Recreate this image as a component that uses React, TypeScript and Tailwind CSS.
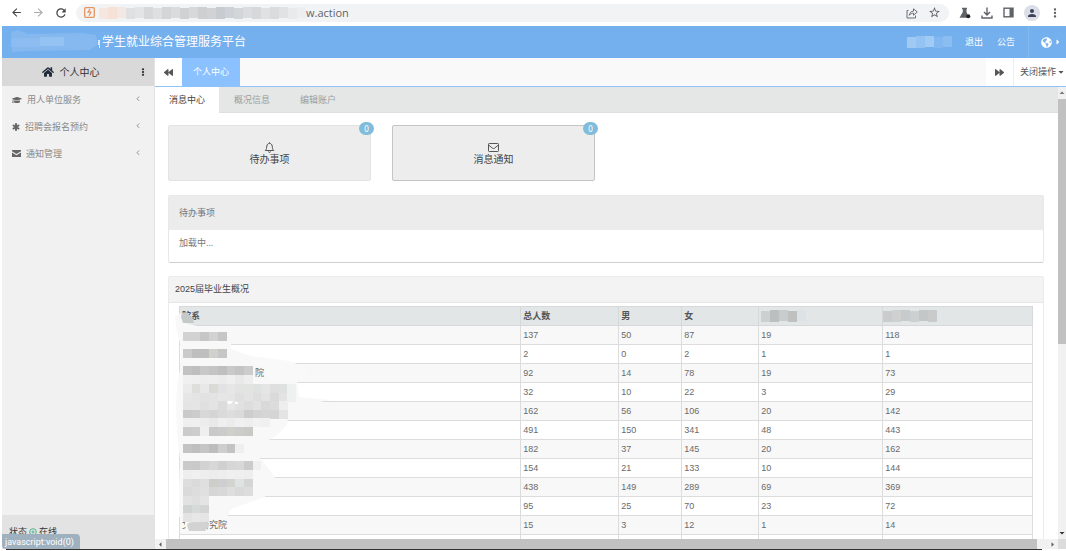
import type { ReactNode } from "react";
import {
  FaBackward,
  FaCaretDown,
  FaCaretRight,
  FaEllipsisV,
  FaForward,
  FaGlobeAmericas,
  FaGraduationCap,
  FaHome,
} from "react-icons/fa";
import {
  MdArrowBack,
  MdArrowDropDown,
  MdArrowDropUp,
  MdArrowForward,
  MdArrowLeft,
  MdArrowRight,
  MdMoreVert,
  MdPerson,
  MdRefresh,
  MdStarBorder,
} from "react-icons/md";

type Row = { dept: string; pad?: boolean; values: number[] };

const rows: Row[] = [
  { dept: "", values: [137, 50, 87, 19, 118] },
  { dept: "", values: [2, 0, 2, 1, 1] },
  { dept: "院", pad: true, values: [92, 14, 78, 19, 73] },
  { dept: "", values: [32, 10, 22, 3, 29] },
  { dept: "", values: [162, 56, 106, 20, 142] },
  { dept: "", values: [491, 150, 341, 48, 443] },
  { dept: "", values: [182, 37, 145, 20, 162] },
  { dept: "", values: [154, 21, 133, 10, 144] },
  { dept: "", values: [438, 149, 289, 69, 369] },
  { dept: "", values: [95, 25, 70, 23, 72] },
  { dept: "文　研究院", values: [15, 3, 12, 1, 14] },
];

// [y, cell colours]
const maskRows: Array<[number, string[]]> = [
  [29, ["#d2d2d2", "#d2d2d2", "#c6c6c6", "#d2d2d2", "#c6c6c6"]],
  [46, ["#cacaca", "#bfbfbf", "#bfbfbf", "#d0d0cc", "#c6c6c6"]],
  [63, ["#c2c2c2", "#bebebe", "#c8c8c8", "#c4c4c4", "#bfbfbf", "#c9c9c9", "#c4c4c4", "#cccccc"]],
  [72, ["#f0f0f0", "#efefef", "#ededed", "#eeeeee", "#ebebeb", "#efefef", "#e9e9e9", "#eeeeee"]],
  [81, ["#ebebeb", "#dedfdc", "#e8e8e8", "#dadad6", "#e2e2e2", "#e6e6e6", "#e3e3e3", "#e2e4e2", "#e0e2e1", "#e4e5e4", "#dedfde", "#dfe1e0", "#eff1f0"]],
  [90, ["#e6e6e6", "#e4e4e4", "#e2e2e2", "#e3e3e3", "#e6e6e6", "#e5e5e5", "#dfdfdf", "#e3e3e3", "#dedede", "#e3e3e3", "#dadada", "#e3e3e3", "#eff1f0"]],
  [98, ["#e4e4e4", "#e5e5e5", "#e0e0e0", "#e3e3e3", "#dcdcdc", "#e6e6e6", "#e1e1e1", "#dddddd", "#e2e2e2", "#d9d9d9", "#dcdcdc", "#eeeeee"]],
  [107, ["#cacaca", "#cccccc", "#d8d8d8", "#d5d5d5", "#dadada", "#dddddd", "#dadada", "#cdcdcd", "#d3d3d3", "#d5d5d5", "#d5d5d5", "#e4e4e4"]],
  [115, ["#efefef", "#f0f0f0", "#ededed", "#e9e9e9", "#efefef", "#ececec", "#f0f0f0", "#eeeeee", "#f2f2f2", "#f0f0f0"]],
  [124, ["#cbcbcb", "#cdcdcd", "#efefef", "#c9c9c9", "#cbcbcb", "#cfcfcb", "#cccccc", "#c9c9c5"]],
  [141, ["#c3c3c3", "#bfbfbf", "#c5c5c5", "#bdbdbd", "#cecece", "#c3c3c3", "#eef0ef"]],
  [158, ["#cacaca", "#c9c9c9", "#d2d2d2", "#d7d7d7", "#d0d0d0", "#d6d6d6", "#d8d8d8", "#cbcbcb", "#f0f0f0"]],
  [167, ["#eeeeee", "#f0f0f0", "#eeeeee", "#ececec", "#eeeeee", "#f0f0f0", "#efefef", "#eeeeee"]],
  [176, ["#dddddd", "#dadada", "#dfdfdf", "#cdcdc9", "#cfcfcf", "#d3d3cf", "#dfe3e1", "#d5d5d5"]],
  [184, ["#dadada", "#dddddd", "#e0e0e0", "#d6d6d6", "#d8d8d8", "#dedede", "#d9d9d9", "#dcdcdc"]],
  [193, ["#e2e2e2", "#dfdfdf", "#e4e4e4"]],
  [202, ["#cfd3d1", "#d6dad8", "#d3d5d4"]],
  [210, ["#e3e3e3", "#e7e7e7", "#e5e5e5"]],
];

function DeptMask() {
  return (
    <svg className="pointer-events-none absolute left-0 top-0" width="170" height="236" viewBox="0 0 170 236" aria-hidden="true">
      <path d="M6 14 12 10 16 20 28 23 62 25 62 46 84 54 84 76 96 78 128 78 130 94 162 97 120 104 118 122 108 132 92 142 84 150 94 158 106 174 98 184 96 194 62 206 58 214 38 216 38 226 30 228 22 230 16 224 16 216 10 214 10 182 11 156 8 130 7 106 8 82 11 66 12 44 7 24Z" fill="#f8f8f8" />
      <path d="M84 53 120 58 136 64 140 76 118 80 98 77 98 64 84 62Z" fill="#f9f9f9" />
      <path d="M12 14 13 10 18 9 24 16 25 20 14 20Z" fill="#c6c9ca" />
      <path d="M18 222q0-3 8-3h11q4 0 3 4l-4 5H20Z" fill="#d2d2d2" />
      <g shapeRendering="crispEdges">
        {maskRows.map(([y, cells]) =>
          cells.map((fill, i) => (
            <rect key={`${y}-${i}`} x={14 + i * 8.7} y={y} width="8.8" height="9" fill={fill} />
          )),
        )}
      </g>
      <path d="M58 98h6l-2 3h-3zM66 99h3v2h-3z" fill="#fff" />
    </svg>
  );
}

function Mosaic({ cells, size, className }: { cells: string[]; size: number; className?: string }) {
  return (
    <svg className={className} width={cells.length * size} height="12" shapeRendering="crispEdges" aria-hidden="true">
      {cells.map((fill, i) => (
        <rect key={i} x={i * size} y={i % 3 === 0 ? 1 : 0} width={size} height={i % 2 ? 12 : 11} fill={fill} />
      ))}
    </svg>
  );
}

function BrowserBar() {
  return (
    <div className="flex h-[26px] shrink-0 items-center pb-px text-[#5f6368]">
      <div className="ml-2 flex gap-[9px] text-[#444]">
        <button type="button" aria-label="后退"><MdArrowBack size={13} /></button>
        <button type="button" aria-label="前进" className="text-[#aaa]"><MdArrowForward size={13} /></button>
        <button type="button" aria-label="刷新"><MdRefresh size={14} /></button>
      </div>
      <div className="ml-2 flex h-[18px] min-w-0 flex-1 items-center rounded-full bg-[#f1f3f4] px-2">
        <svg width="11" height="11" viewBox="0 0 11 11" fill="none" stroke="#e9935f" className="shrink-0" aria-hidden="true">
          <rect x="0.7" y="0.7" width="9.6" height="9.6" rx="1" strokeWidth="1.3" />
          <path d="M6 2.2 4 5.2h3L5 8.8" strokeWidth="1.2" />
        </svg>
        <Mosaic
          className="ml-1 shrink-0"
          size={9}
          cells={["#f5e6df", "#f6e1d7", "#f3e8e3", "#dfe0e1", "#e3e4e5", "#d6d8da", "#dddfe0", "#d4d5d7", "#d9dbdc", "#cfd1d3", "#d6d8d9", "#cdcfd1", "#d0d2d4", "#c8ccd0", "#cdd2d7", "#d3d6d9", "#dadcde", "#d6d8da", "#dfe1e2", "#d9dbdc", "#e0e2e3", "#e8eaeb", "#eceeef"]}
        />
        <span className="font-['Open_Sans',sans-serif] text-[11px] leading-4">w.action</span>
        <button type="button" aria-label="分享" className="ml-auto">
          <svg width="12" height="12" viewBox="0 0 12 12" fill="none" stroke="currentColor" strokeWidth="0.9" aria-hidden="true">
            <path d="M2.500 3.500H1v7.500h8.500V8.500M3.300 8.300C3.800 5.400 5.300 4.200 7.500 4.200V1.800L11.300 5 7.500 8.200V6.200C5.800 6.200 4.500 6.800 3.300 8.300Z" />
          </svg>
        </button>
        <button type="button" aria-label="收藏" className="ml-2.5"><MdStarBorder size={13} /></button>
      </div>
      <button type="button" aria-label="实验" className="ml-2.5">
        <svg width="12" height="12" viewBox="0 0 12 12" aria-hidden="true">
          <path d="M3 0.800h5v1.400H7.500V5l2.500 5.700H0.500L3.800 5V2.200H3Z" fill="currentColor" />
          <circle cx="9.300" cy="9.300" r="2" fill="#222" />
        </svg>
      </button>
      <button type="button" aria-label="下载" className="ml-2.5">
        <svg width="12" height="12" viewBox="0 0 12 12" fill="none" stroke="currentColor" strokeWidth="1.400" aria-hidden="true">
          <path d="M6 0.500v7M3 5l3 3 3-3M1 8.500V11h10V8.500" />
        </svg>
      </button>
      <button type="button" aria-label="侧边栏" className="ml-2.5">
        <svg width="11" height="11" viewBox="0 0 11 11" aria-hidden="true">
          <rect x="1" y="1.200" width="9" height="8.600" fill="none" stroke="currentColor" strokeWidth="1.400" />
          <path d="M6.500 1H10v9H6.500Z" fill="currentColor" />
        </svg>
      </button>
      <button type="button" aria-label="用户" className="ml-2.5 flex size-4 items-center justify-center rounded-full bg-[#dcdfe8] text-[#3c4257]"><MdPerson size={12} /></button>
      <button type="button" aria-label="更多" className="ml-2 mr-1"><MdMoreVert size={14} /></button>
    </div>
  );
}

function Header() {
  return (
    <header className="flex h-8 shrink-0 items-center bg-[#74afee] text-white">
      <div className="flex min-w-0 flex-1 items-center pl-2">
        <svg width="92" height="24" viewBox="0 0 92 24" className="shrink-0" aria-hidden="true">
          <path d="M1 2 8 0 18 4 72 3 86 5 88 14 80 20 20 21 2 22Z" fill="#84b8ef" />
          <path d="M1 8H30V17H1Z" fill="#8dbdf0" />
          <path d="M30 7H54V16H30Z" fill="#94c2f2" />
          <path d="M54 8H84V17H54Z" fill="#86b9ef" />
          <path d="M88 10h2v8h-1v-3h-1z" fill="#d6e8fb" />
        </svg>
        <h1 className="truncate text-[12px] leading-4">学生就业综合管理服务平台</h1>
      </div>
      <Mosaic size={9} className="mr-3" cells={["#a0c9f4", "#94c2f2", "#a1caf4", "#82b7ef", "#8abdf0"]} />
      <nav className="flex h-full items-center text-[9px]">
        <a href="#logout" className="px-px">退出</a>
        <a href="#notice" className="ml-3 px-px">公告</a>
        <button type="button" aria-label="语言" className="ml-3 flex h-full items-center gap-0.5 border-l border-[#84b9f0] pl-3 pr-1">
          <FaGlobeAmericas size={11} />
          <FaCaretRight size={8} />
        </button>
      </nav>
    </header>
  );
}

function SideItem({ icon, label }: { icon: ReactNode; label: string }) {
  return (
    <li>
      <a href="#menu" className="flex h-[27px] items-center pl-2.5 pr-3.5 text-[9px] text-[#8a8a8a]">
        <span className="text-[#666]">{icon}</span>
        <span className="ml-[5px] flex-1">{label}</span>
        <svg width="4" height="8" viewBox="0 0 4 8" fill="none" stroke="#888" strokeWidth="0.9" aria-hidden="true">
          <path d="M3.200 0.500 1 2.700l2.200 2.200" />
        </svg>
      </a>
    </li>
  );
}

function Sidebar() {
  return (
    <aside className="flex w-[153px] shrink-0 flex-col border-r border-[#e2e2e2] bg-[#f1f1f1]">
      <div className="flex h-7 shrink-0 items-center bg-[#d9d9d9] pr-[7px] text-[#333]">
        <div className="flex flex-1 items-center justify-center gap-1.5 text-[10px]">
          <FaHome size={12} className="text-[#222c3c]" />
          个人中心
        </div>
        <FaEllipsisV size={8} />
      </div>
      <ul className="flex-1">
        <SideItem icon={<FaGraduationCap size={10} />} label="用人单位服务" />
        <SideItem
          icon={
            <svg width="8" height="8" viewBox="0 0 8 8" stroke="currentColor" strokeWidth="2" strokeLinecap="round" aria-hidden="true">
              <path d="M4 1v6M1.500 2.500l5 3M6.500 2.500l-5 3" />
            </svg>
          }
          label="招聘会报名预约"
        />
        <SideItem
          icon={
            <svg width="9" height="7" viewBox="0 0 9 7" fill="currentColor" aria-hidden="true">
              <path d="M0 0h9v1.200L4.500 4 0 1.200ZM0 2.400l4.500 2.800L9 2.400V7H0Z" />
            </svg>
          }
          label="通知管理"
        />
      </ul>
      <div className="relative h-[34px] shrink-0 bg-[#e3e3e3] pl-[7px] pt-3 text-[9px] leading-none text-[#333]">
        <div className="flex h-[9px] items-center gap-0.5">
          状态
          <svg width="8" height="8" viewBox="0 0 8 8" fill="none" stroke="#4db592" aria-hidden="true">
            <circle cx="4" cy="4" r="3.300" />
            <circle cx="4" cy="4" r="1" />
          </svg>
          在线
        </div>
        <div className="absolute bottom-0 left-0 rounded-tr-sm rounded-bl bg-[#9fb0be] px-[3px] pb-px pt-[3px] pr-1.5 font-['Roboto',sans-serif] text-[9px] leading-[11px] text-white">javascript:void(0)</div>
      </div>
    </aside>
  );
}

function Counter({ icon, label, count, active }: { icon: ReactNode; label: string; count: number; active?: boolean }) {
  return (
    <button
      type="button"
      className={`relative flex h-14 w-[203px] flex-col items-center justify-center rounded-xs border bg-[#ededed] pt-px text-[10px] leading-[13px] text-[#444] ${active ? "border-[#c4c4c4]" : "border-[#e3e3e3]"}`}
    >
      {icon}
      {label}
      <span className="absolute -right-1 -top-1 flex h-[13px] w-[15px] items-center justify-center rounded-full bg-[#82bcdb] text-[8px] text-white">{count}</span>
    </button>
  );
}

function SummaryTable() {
  return (
    <table className="w-full table-fixed border-collapse font-['Liberation_Sans','Noto_Sans_CJK_SC',sans-serif] text-[9px] leading-[18px] text-[#6a6a6a]">
      <colgroup>
        <col className="w-[40%]" />
        <col className="w-[98px]" />
        <col className="w-[63px]" />
        <col className="w-[77px]" />
        <col className="w-[124px]" />
        <col />
      </colgroup>
      <thead>
        <tr className="bg-[#e2e6e7] text-left text-[#555]">
          <th className="border border-[#d6d9da] px-0.5 py-0">院系</th>
          <th className="border border-[#d6d9da] px-0.5 py-0">总人数</th>
          <th className="border border-[#d6d9da] px-0.5 py-0">男</th>
          <th className="border border-[#d6d9da] px-0.5 py-0">女</th>
          <th className="border border-[#d6d9da] px-0.5 py-0">
            <Mosaic size={9} cells={["#cdd0d0", "#bcbfbf", "#c9cccc", "#bfc1c1", "#dde2e4"]} />
          </th>
          <th className="border border-[#d6d9da] p-0">
            <Mosaic size={9} cells={["#c9cccc", "#cfd1d1", "#c8cbcb", "#cdd0d0", "#c4c7c7", "#c9cbcb"]} />
          </th>
        </tr>
      </thead>
      <tbody>
        {rows.map((row, i) => (
          <tr key={i} className="h-[19px] odd:bg-[#f8f8f8]">
            <td className={`border border-[#dcdcdc] py-0 pr-0.5 ${row.pad ? "pl-[75px]" : "pl-0.5"}`}>{row.dept}</td>
            {row.values.map((value, j) => (
              <td key={j} className="border border-[#dcdcdc] px-0.5 py-0">{value}</td>
            ))}
          </tr>
        ))}
        <tr className="h-[19px]">
          {[0, 1, 2, 3, 4, 5].map((n) => (
            <td key={n} className="border border-[#dcdcdc] p-0" />
          ))}
        </tr>
      </tbody>
    </table>
  );
}

function Workspace() {
  return (
    <div className="flex min-h-0 flex-1">
      <div className="flex min-w-0 flex-1 flex-col">
        <div className="min-h-0 flex-1 overflow-hidden">
          <div className="flex h-[26px] border-b border-[#dfe1e0] bg-[#e5e7e6] text-[9px] text-[#9a9e9e]">
            <button type="button" className="-mb-px bg-white px-3.5 text-[#444]">消息中心</button>
            <button type="button" className="px-[15px]">概况信息</button>
            <button type="button" className="px-[15px]">编辑账户</button>
          </div>
          <div className="py-3 pl-[13px] pr-3.5">
            <div className="flex gap-[21px]">
              <Counter
                label="待办事项"
                count={0}
                icon={
                  <svg width="11" height="11" viewBox="0 0 11 11" fill="none" stroke="currentColor" strokeWidth="0.9" aria-hidden="true">
                    <path d="M5.500 0.300v1M1.300 8.500C2.800 7.200 2.500 5.500 2.800 4 3.100 2.200 4.200 1.400 5.500 1.400S7.900 2.200 8.200 4c0.300 1.500 0 3.200 1.500 4.500ZM4.500 9.500a1 0.900 0 0 0 2 0" />
                  </svg>
                }
              />
              <Counter
                active
                label="消息通知"
                count={0}
                icon={
                  <svg width="11" height="11" viewBox="0 0 11 11" fill="none" stroke="currentColor" strokeWidth="0.9" aria-hidden="true">
                    <rect x="0.500" y="1.500" width="10" height="8" rx="0.800" />
                    <path d="M0.800 3.200 4.500 6.200q1 0.700 2 0L10.200 3.200" />
                  </svg>
                }
              />
            </div>
            <section className="mt-3.5 rounded-xs border border-[#e8e8e8] border-b-[#cfcfcf] text-[9px] text-[#777]">
              <h2 className="bg-[#ececec] px-2.5 leading-[34px]">待办事项</h2>
              <p className="h-8 px-2.5 leading-[26px]">加载中...</p>
            </section>
            <section className="mt-[13px] rounded-xs border border-[#ebebeb] bg-white">
              <h2 className="border-b border-[#e6e6e6] bg-[#f3f3f3] px-1.5 font-['Liberation_Sans','Noto_Sans_CJK_SC',sans-serif] text-[9px] leading-[25px] text-[#444]">2025届毕业生概况</h2>
              <div className="relative px-2.5 pt-[3px]">
                <SummaryTable />
                <DeptMask />
              </div>
            </section>
          </div>
        </div>
        <div className="flex h-2.5 shrink-0 items-center bg-[#f1f1f1] text-[#555]">
          <MdArrowLeft size={11} />
          <div className="h-full flex-1 bg-[#c1c1c1]" />
          <MdArrowRight size={11} className="ml-2.5" />
        </div>
      </div>
      <div className="flex w-2 shrink-0 flex-col items-center overflow-hidden bg-[#f1f1f1] text-[#777]">
        <MdArrowDropUp size={12} className="shrink-0" />
        <div className="h-[53%] w-full bg-[#c1c1c1]" />
        <MdArrowDropDown size={12} className="mt-auto shrink-0 text-[#333]" />
        <div className="h-2.5 w-full shrink-0 bg-[#dcdcdc]" />
      </div>
    </div>
  );
}

export default function App() {
  return (
    <div className="flex h-screen flex-col overflow-hidden bg-white pl-0.5 font-['Noto_Sans','Noto_Sans_CJK_SC',sans-serif]">
      <BrowserBar />
      <Header />
      <div className="flex min-h-0 flex-1">
        <Sidebar />
        <main className="flex min-w-0 flex-1 flex-col">
          <div className="flex h-[29px] shrink-0 border-b border-[#8fc3fb] bg-[#f9f9f9] text-[9px] text-[#555]">
            <button type="button" aria-label="向左" className="flex w-[27px] items-center justify-center bg-white"><FaBackward size={9} /></button>
            <button type="button" className="bg-[#8cc1ff] px-[11px] text-white">个人中心</button>
            <button type="button" aria-label="向右" className="ml-auto flex w-7 items-center justify-center border-r border-[#eee] bg-white"><FaForward size={9} /></button>
            <button type="button" className="flex items-center gap-px bg-white pl-1.5 pr-px">
              关闭操作
              <FaCaretDown size={8} />
            </button>
          </div>
          <Workspace />
        </main>
      </div>
      <div className="h-0.5 shrink-0 pl-1 pr-6">
        <div className="h-px bg-[#333]" />
      </div>
    </div>
  );
}
